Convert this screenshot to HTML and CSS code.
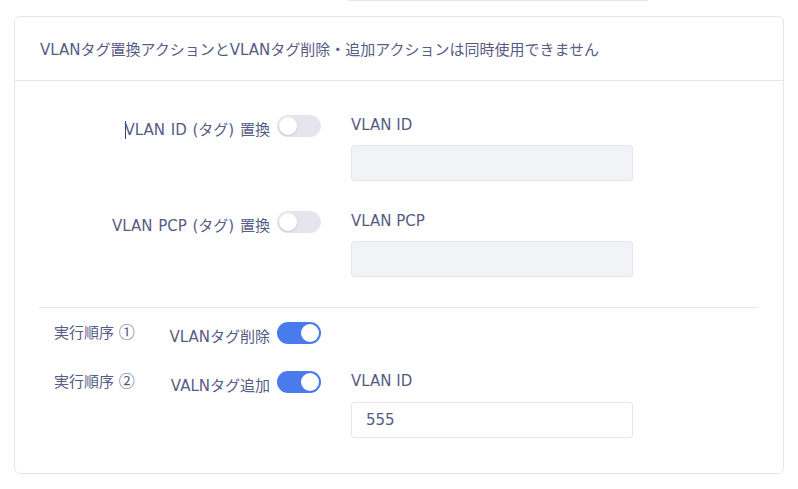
FILE: index.html
```html
<!DOCTYPE html>
<html lang="ja">
<head>
    <meta charset="UTF-8">
    <meta name="viewport" content="width=device-width, initial-scale=1.0">
    <title>VLANタグ設定</title>
    <link rel="stylesheet" href="styles.css">
</head>
<body>
    <!-- bottom edge of the field above, scrolled out of view -->
    <div class="prev-field"></div>

    <div class="card">
        <div class="card-header">VLANタグ置換アクションとVLANタグ削除・追加アクションは同時使用できません</div>

        <div class="card-body">
            <div class="form-row">
                <div class="switch-cell">
                    <span class="switch-label"><span class="caret"></span>VLAN ID (タグ) 置換</span>
                    <span class="switch"></span>
                </div>
                <div class="field">
                    <label class="field-label">VLAN ID</label>
                    <input class="field-input" type="text" disabled>
                </div>
            </div>

            <div class="form-row">
                <div class="switch-cell">
                    <span class="switch-label">VLAN PCP (タグ) 置換</span>
                    <span class="switch"></span>
                </div>
                <div class="field">
                    <label class="field-label">VLAN PCP</label>
                    <input class="field-input" type="text" disabled>
                </div>
            </div>

            <hr class="divider">

            <div class="form-row order-row">
                <div class="switch-cell">
                    <span class="order-label">実行順序 <span class="num">①</span></span>
                    <span class="switch-label">VLANタグ削除</span>
                    <span class="switch on"></span>
                </div>
            </div>

            <div class="form-row order-row">
                <div class="switch-cell">
                    <span class="order-label">実行順序 <span class="num">②</span></span>
                    <span class="switch-label">VALNタグ追加</span>
                    <span class="switch on"></span>
                </div>
                <div class="field">
                    <label class="field-label">VLAN ID</label>
                    <input class="field-input active" type="text" value="555">
                </div>
            </div>
        </div>
    </div>
</body>
</html>
```

FILE: styles.css
```css
/* page */
body {
    margin: 0;
    font-family: "DejaVu Sans", "Noto Sans CJK JP", sans-serif;
    font-size: 15px;
    color: #575c84;
    background: #fff;
}

.prev-field {
    margin-left: 348px;
    width: 300px;
    height: 0;
    border-bottom: 1px solid #e4e7ee;
}

/* card */
.card {
    margin: 15px 14px 0 14px;
    border: 1px solid #e4e7ee;
    border-radius: 6px;
}

.card-header {
    height: 63px;
    display: flex;
    align-items: center;
    padding: 0 25px;
    border-bottom: 1px solid #e4e7ee;
}

.card-body {
    padding: 34px 25px 35px 24px;
}

/* rows */
.form-row {
    display: grid;
    grid-template-columns: 282px 282px;
    column-gap: 30px;
    align-items: start;
    margin-bottom: 30px;
}

.form-row:last-child {
    margin-bottom: 0;
}

.order-row {
    margin-bottom: 27px;
}

.switch-cell {
    display: flex;
    align-items: center;
    justify-content: flex-end;
    gap: 7px;
    height: 22px;
}

.switch-label {
    position: relative;
    top: 2px;
    white-space: nowrap;
    word-spacing: 1px;
}

.caret {
    display: inline-block;
    width: 1px;
    height: 18px;
    margin-right: -1px;
    vertical-align: -4px;
    background: #3b3f8a;
}

.order-label {
    margin-left: 15px;
    margin-right: auto;
    position: relative;
    top: -2px;
    white-space: nowrap;
}

.num {
    font-family: "Noto Sans CJK JP", sans-serif;
    font-size: 16px;
}

/* switch */
.switch {
    position: relative;
    width: 44px;
    height: 22px;
    border-radius: 11px;
    background: #e5e5f0;
    flex-shrink: 0;
}

.switch::after {
    content: "";
    position: absolute;
    top: 2px;
    left: 2px;
    width: 18px;
    height: 18px;
    border-radius: 50%;
    background: #fff;
    box-shadow: 0 1px 2px rgba(60, 60, 90, 0.2);
}

.switch.on {
    background: #4a7bec;
}

.switch.on::after {
    left: 24px;
    box-shadow: none;
}

/* fields */
.field-label {
    display: block;
    line-height: 20px;
    margin-bottom: 10px;
}

.order-row .field-label {
    margin-bottom: 11px;
}

.field-input {
    box-sizing: border-box;
    display: block;
    width: 282px;
    height: 36px;
    padding: 0 14px;
    border: 1px solid #e4e7ee;
    border-radius: 3px;
    background: #f2f3f7;
    font-family: inherit;
    font-size: 15px;
    color: #575c84;
}

.field-input.active {
    background: #fff;
}

.divider {
    border: 0;
    border-top: 1px solid #e4e7ee;
    margin: 30px 0 14px 0;
}
```
